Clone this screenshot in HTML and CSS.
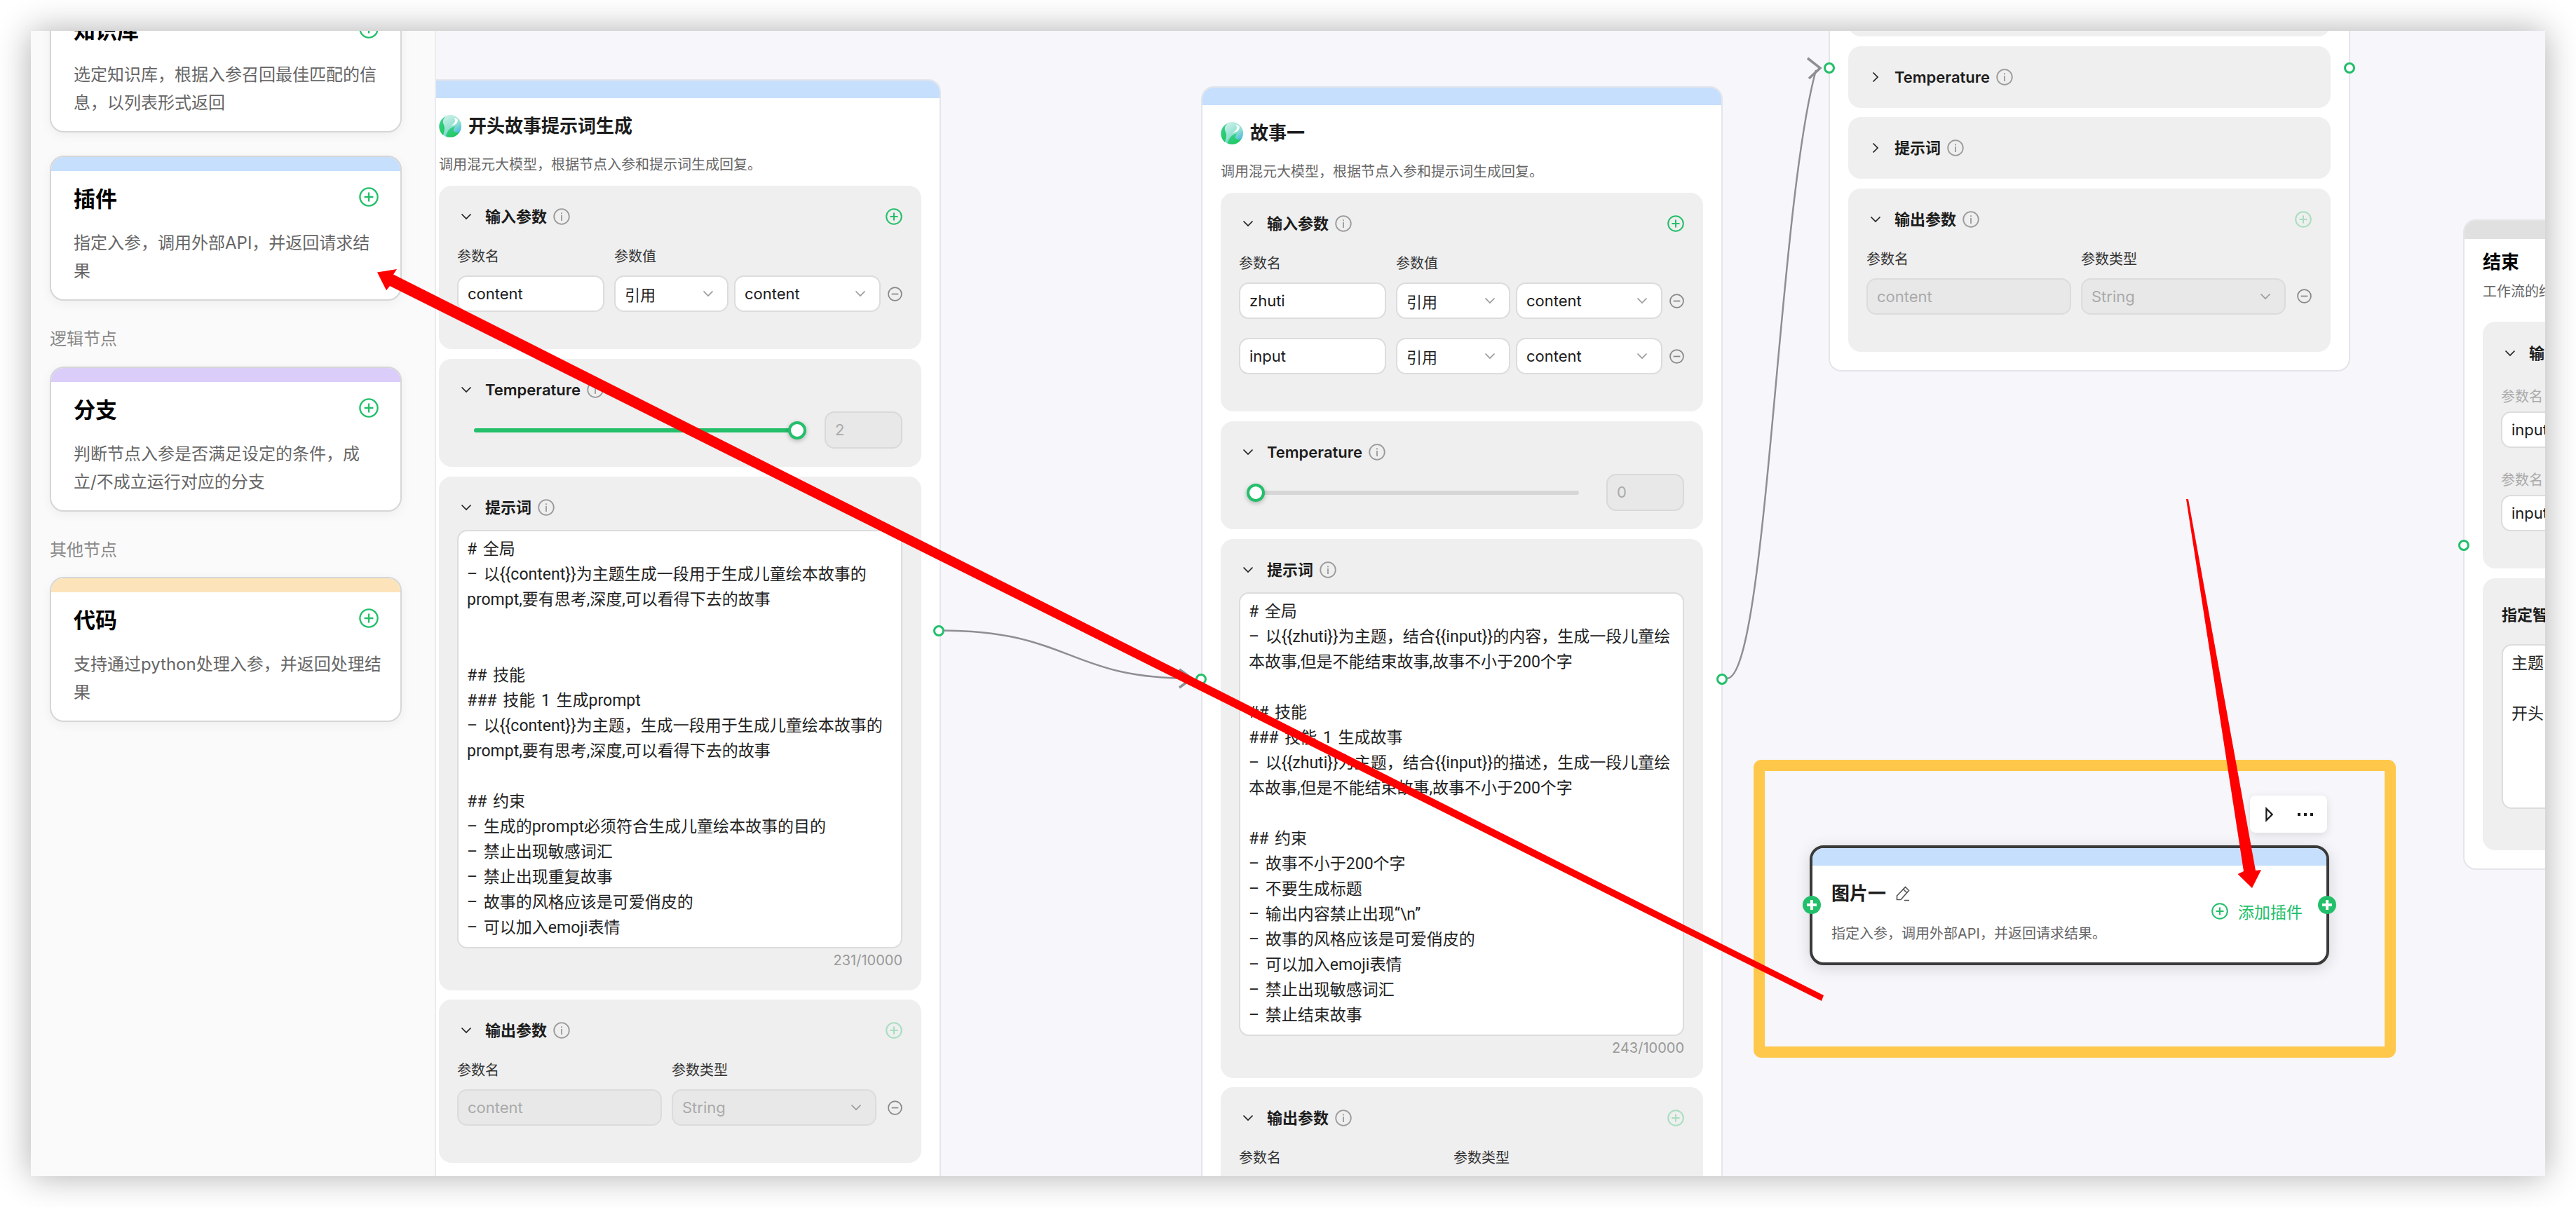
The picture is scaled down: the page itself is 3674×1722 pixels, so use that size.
FILE: index.html
```html
<!DOCTYPE html>
<html lang="zh-CN">
<head>
<meta charset="utf-8">
<title>工作流</title>
<link rel="stylesheet" href="styles.css">
</head>
<body>
<svg class="defs" width="0" height="0" aria-hidden="true">
  <defs>
    <linearGradient id="lg-hy-base" x1="0.2" y1="0" x2="0.9" y2="1">
      <stop offset="0" stop-color="#d6f3ee"/>
      <stop offset="0.55" stop-color="#8fe0cf"/>
      <stop offset="1" stop-color="#2aa6e8"/>
    </linearGradient>
    <linearGradient id="lg-hy-green" x1="0" y1="0" x2="0.6" y2="1">
      <stop offset="0" stop-color="#3ed09a"/>
      <stop offset="1" stop-color="#1fc95a"/>
    </linearGradient>
    <symbol id="i-logo" viewBox="0 0 32 32">
      <circle cx="16" cy="16" r="16" fill="url(#lg-hy-base)"/>
      <path d="M10 2C4 5 0 11 .5 18c.5 5 2.500 8 5.500 11 1-4 2-7 2-10 0-5-3-7-2-11 .5-2.500 2-4.500 4-6z" fill="url(#lg-hy-green)"/>
      <path d="M10 30.500c3 1.300 6 1.500 8 1.300 5-.6 9-3.500 11-7.500-2.500 1-6 1-7.500-.7-1.500-2-.5-4.500 2-7.300-5 1-9 3.500-11 7.500-1.300 2.700-2 4.700-2.500 6.700z" fill="url(#lg-hy-green)"/>
      <path d="M20.500 3.500c3 2 3.500 5.500 1 8.500-1.300 1.500-3.200 2.500-5 3 4.200.2 8.500-1.500 10-5.500.5-1.200.5-2.300 0-3.500-1.700-1-3.700-1.900-6-2.500z" fill="#fff"/>
    </symbol>
    <symbol id="i-down" viewBox="0 0 16 16"><path d="M1.500 4.500L8 11l6.500-6.500" fill="none" stroke="currentColor" stroke-width="1.700"/></symbol>
    <symbol id="i-right" viewBox="0 0 16 16"><path d="M4.500 1.500L11 8l-6.500 6.500" fill="none" stroke="currentColor" stroke-width="1.700"/></symbol>
    <symbol id="i-info" viewBox="0 0 24 24"><circle cx="12" cy="12" r="10.800" fill="none" stroke="currentColor" stroke-width="1.800"/><rect x="11.100" y="10" width="1.800" height="8" fill="currentColor"/><rect x="11.100" y="6.300" width="1.800" height="2" fill="currentColor"/></symbol>
    <symbol id="i-plus" viewBox="0 0 24 24"><circle cx="12" cy="12" r="10.800" fill="none" stroke="currentColor" stroke-width="2"/><path d="M12 6.500v11M6.500 12h11" stroke="currentColor" stroke-width="2"/></symbol>
    <symbol id="i-minus" viewBox="0 0 24 24"><circle cx="12" cy="12" r="10.800" fill="none" stroke="currentColor" stroke-width="2"/><path d="M6.500 12h11" stroke="currentColor" stroke-width="2"/></symbol>
    <symbol id="i-pencil" viewBox="0 0 24 24"><path d="M15.500 2.500l5 5L9 20.500H3.500V15zM12.500 5.500l5 5M14 21.500h7" fill="none" stroke="currentColor" stroke-width="1.600"/></symbol>
  </defs>
</svg>

<div class="window">
  <aside class="sidebar">
    <div class="card card-blue card-scrolled">
      <div class="card-band"></div>
      <div class="card-title"><span>知识库</span><svg class="ico-card"><use href="#i-plus"/></svg></div>
      <p class="card-desc">选定知识库，根据入参召回最佳匹配的信息，以列表形式返回</p>
    </div>
    <div class="card card-blue">
      <div class="card-band"></div>
      <div class="card-title"><span>插件</span><svg class="ico-card"><use href="#i-plus"/></svg></div>
      <p class="card-desc">指定入参，调用外部API，并返回请求结果</p>
    </div>
    <div class="side-label">逻辑节点</div>
    <div class="card card-purple">
      <div class="card-band"></div>
      <div class="card-title"><span>分支</span><svg class="ico-card"><use href="#i-plus"/></svg></div>
      <p class="card-desc">判断节点入参是否满足设定的条件，成<br>立/不成立运行对应的分支</p>
    </div>
    <div class="side-label">其他节点</div>
    <div class="card card-orange">
      <div class="card-band"></div>
      <div class="card-title"><span>代码</span><svg class="ico-card"><use href="#i-plus"/></svg></div>
      <p class="card-desc">支持通过python处理入参，并返回处理结果</p>
    </div>
  </aside>

  <main class="canvas">
    <svg class="edges" viewBox="622 44 3008 1634" aria-hidden="true">
      <path d="M1340 899.500C1530 899.500 1520 968 1700 968" class="edge"/>
      <path d="M1682 955L1700 968L1682 981" class="edge edge-head"/>
      <path d="M2463 968C2520 968 2535 300 2590 100" class="edge"/>
      <path d="M2578 83L2596 97L2580 112" class="edge edge-head"/>
    </svg>

    <!-- 开头故事提示词生成 -->
    <section class="node node-a">
      <div class="node-band"></div>
      <div class="node-head"><svg class="ico-logo"><use href="#i-logo"/></svg><h3>开头故事提示词生成</h3></div>
      <p class="node-desc">调用混元大模型，根据节点入参和提示词生成回复。</p>
      <div class="node-secs">
        <div class="sec">
          <div class="sec-head"><svg class="ico-chev"><use href="#i-down"/></svg><h4>输入参数</h4><svg class="ico-info"><use href="#i-info"/></svg><svg class="ico-add"><use href="#i-plus"/></svg></div>
          <div class="lbl-row"><span class="lbl lbl-name">参数名</span><span class="lbl">参数值</span></div>
          <div class="row-in">
            <div class="ctl ctl-name">content</div>
            <div class="ctl ctl-type">引用<svg class="ico-sel"><use href="#i-down"/></svg></div>
            <div class="ctl ctl-ref">content<svg class="ico-sel"><use href="#i-down"/></svg></div>
            <svg class="ico-minus"><use href="#i-minus"/></svg>
          </div>
        </div>
        <div class="sec sec-temp">
          <div class="sec-head"><svg class="ico-chev"><use href="#i-down"/></svg><h4 class="latin">Temperature</h4><svg class="ico-info"><use href="#i-info"/></svg></div>
          <div class="slider-row">
            <div class="slider"><div class="slider-fill"></div><div class="thumb thumb-end"></div></div>
            <div class="num">2</div>
          </div>
        </div>
        <div class="sec sec-prompt">
          <div class="sec-head"><svg class="ico-chev"><use href="#i-down"/></svg><h4>提示词</h4><svg class="ico-info"><use href="#i-info"/></svg></div>
          <div class="prompt"># 全局
– 以{{content}}为主题生成一段用于生成儿童绘本故事的
prompt,要有思考,深度,可以看得下去的故事


## 技能
### 技能 1 生成prompt
– 以{{content}}为主题，生成一段用于生成儿童绘本故事的
prompt,要有思考,深度,可以看得下去的故事

## 约束
– 生成的prompt必须符合生成儿童绘本故事的目的
– 禁止出现敏感词汇
– 禁止出现重复故事
– 故事的风格应该是可爱俏皮的
– 可以加入emoji表情</div>
          <div class="counter">231/10000</div>
        </div>
        <div class="sec">
          <div class="sec-head"><svg class="ico-chev"><use href="#i-down"/></svg><h4>输出参数</h4><svg class="ico-info"><use href="#i-info"/></svg><svg class="ico-add ico-add-off"><use href="#i-plus"/></svg></div>
          <div class="lbl-row"><span class="lbl lbl-out">参数名</span><span class="lbl">参数类型</span></div>
          <div class="row-in">
            <div class="ctl ctl-off ctl-out">content</div>
            <div class="ctl ctl-off ctl-out ctl-out-b">String<svg class="ico-sel"><use href="#i-down"/></svg></div>
            <svg class="ico-minus ico-minus-out"><use href="#i-minus"/></svg>
          </div>
        </div>
      </div>
      <span class="port port-a"></span>
    </section>

    <!-- 故事一 -->
    <section class="node node-b">
      <div class="node-band"></div>
      <div class="node-head"><svg class="ico-logo"><use href="#i-logo"/></svg><h3>故事一</h3></div>
      <p class="node-desc">调用混元大模型，根据节点入参和提示词生成回复。</p>
      <div class="node-secs">
        <div class="sec">
          <div class="sec-head"><svg class="ico-chev"><use href="#i-down"/></svg><h4>输入参数</h4><svg class="ico-info"><use href="#i-info"/></svg><svg class="ico-add"><use href="#i-plus"/></svg></div>
          <div class="lbl-row"><span class="lbl lbl-name">参数名</span><span class="lbl">参数值</span></div>
          <div class="row-in">
            <div class="ctl ctl-name">zhuti</div>
            <div class="ctl ctl-type">引用<svg class="ico-sel"><use href="#i-down"/></svg></div>
            <div class="ctl ctl-ref">content<svg class="ico-sel"><use href="#i-down"/></svg></div>
            <svg class="ico-minus"><use href="#i-minus"/></svg>
          </div>
          <div class="row-in row-next">
            <div class="ctl ctl-name">input</div>
            <div class="ctl ctl-type">引用<svg class="ico-sel"><use href="#i-down"/></svg></div>
            <div class="ctl ctl-ref">content<svg class="ico-sel"><use href="#i-down"/></svg></div>
            <svg class="ico-minus"><use href="#i-minus"/></svg>
          </div>
        </div>
        <div class="sec sec-temp">
          <div class="sec-head"><svg class="ico-chev"><use href="#i-down"/></svg><h4 class="latin">Temperature</h4><svg class="ico-info"><use href="#i-info"/></svg></div>
          <div class="slider-row">
            <div class="slider slider-empty"><div class="thumb thumb-start"></div></div>
            <div class="num">0</div>
          </div>
        </div>
        <div class="sec sec-prompt">
          <div class="sec-head"><svg class="ico-chev"><use href="#i-down"/></svg><h4>提示词</h4><svg class="ico-info"><use href="#i-info"/></svg></div>
          <div class="prompt"># 全局
– 以{{zhuti}}为主题，结合{{input}}的内容，生成一段儿童绘
本故事,但是不能结束故事,故事不小于200个字

## 技能
### 技能 1 生成故事
– 以{{zhuti}}为主题，结合{{input}}的描述，生成一段儿童绘
本故事,但是不能结束故事,故事不小于200个字

## 约束
– 故事不小于200个字
– 不要生成标题
– 输出内容禁止出现“\n”
– 故事的风格应该是可爱俏皮的
– 可以加入emoji表情
– 禁止出现敏感词汇
– 禁止结束故事</div>
          <div class="counter">243/10000</div>
        </div>
        <div class="sec">
          <div class="sec-head"><svg class="ico-chev"><use href="#i-down"/></svg><h4>输出参数</h4><svg class="ico-info"><use href="#i-info"/></svg><svg class="ico-add ico-add-off"><use href="#i-plus"/></svg></div>
          <div class="lbl-row"><span class="lbl lbl-out">参数名</span><span class="lbl">参数类型</span></div>
        </div>
      </div>
      <span class="port port-b-in"></span>
      <span class="port port-b-out"></span>
    </section>

    <!-- 第三个节点（画布顶部被裁切） -->
    <section class="node node-c">
      <div class="node-secs">
        <div class="sec sec-hidden"></div>
        <div class="sec sec-closed">
          <div class="sec-head"><svg class="ico-chev"><use href="#i-right"/></svg><h4 class="latin">Temperature</h4><svg class="ico-info"><use href="#i-info"/></svg></div>
        </div>
        <div class="sec sec-closed">
          <div class="sec-head"><svg class="ico-chev"><use href="#i-right"/></svg><h4>提示词</h4><svg class="ico-info"><use href="#i-info"/></svg></div>
        </div>
        <div class="sec">
          <div class="sec-head"><svg class="ico-chev"><use href="#i-down"/></svg><h4>输出参数</h4><svg class="ico-info"><use href="#i-info"/></svg><svg class="ico-add ico-add-off"><use href="#i-plus"/></svg></div>
          <div class="lbl-row"><span class="lbl lbl-out">参数名</span><span class="lbl">参数类型</span></div>
          <div class="row-in">
            <div class="ctl ctl-off ctl-out">content</div>
            <div class="ctl ctl-off ctl-out ctl-out-b">String<svg class="ico-sel"><use href="#i-down"/></svg></div>
            <svg class="ico-minus ico-minus-out"><use href="#i-minus"/></svg>
          </div>
        </div>
      </div>
      <span class="port port-c-in"></span>
      <span class="port port-c-out"></span>
    </section>

    <!-- 结束 -->
    <section class="node node-end">
      <div class="node-band node-band-gray"></div>
      <h3 class="end-title">结束</h3>
      <p class="end-desc">工作流的终止节点</p>
      <div class="node-secs">
        <div class="sec sec-end">
          <div class="sec-head"><svg class="ico-chev"><use href="#i-down"/></svg><h4>输出参数</h4></div>
          <div class="lbl end-lbl">参数名</div>
          <div class="ctl end-ctl">input</div>
          <div class="lbl end-lbl end-lbl-next">参数名</div>
          <div class="ctl end-ctl">input</div>
        </div>
        <div class="sec sec-reply">
          <h4 class="reply-title">指定智能体回复</h4>
          <div class="prompt prompt-end">主题：{{zhuti}}

开头：{{content}}</div>
        </div>
      </div>
      <span class="port port-end"></span>
    </section>

    <!-- 图片一（插件节点，已选中） -->
    <section class="plugin">
      <div class="plugin-tools">
        <svg class="ico-play" viewBox="0 0 12 22"><path d="M1.500 2v18L10.500 11z" fill="none" stroke="#1c1c1c" stroke-width="2.400"/></svg>
        <span class="dots"><i></i><i></i><i></i></span>
      </div>
      <div class="plugin-band"></div>
      <div class="plugin-body">
        <div class="plugin-main">
          <div class="plugin-title"><h3>图片一</h3><svg class="ico-pencil"><use href="#i-pencil"/></svg></div>
          <p class="plugin-desc">指定入参，调用外部API，并返回请求结果。</p>
        </div>
        <div class="plugin-add"><svg class="ico-add"><use href="#i-plus"/></svg><span>添加插件</span></div>
      </div>
      <span class="port-fill port-fill-l"><svg viewBox="0 0 26 26"><path d="M13 6v14M6 13h14" stroke="#fff" stroke-width="4"/></svg></span>
      <span class="port-fill port-fill-r"><svg viewBox="0 0 26 26"><path d="M13 6v14M6 13h14" stroke="#fff" stroke-width="4"/></svg></span>
    </section>
  </main>
</div>

<!-- 截图标注：黄框与红色箭头 -->
<svg class="annot" viewBox="0 0 3674 1722" aria-hidden="true">
  <rect x="2509" y="1092" width="900" height="409" rx="3" class="annot-box"/>
  <polygon class="annot-arrow" points="538,388.600 566,384 561,391.500 2601,1420 2598,1428 556,408 551,414.300"/>
  <polygon class="annot-arrow" points="3118,712 3121,712 3217,1242 3225,1241 3212,1267 3191.600,1247 3200,1243"/>
</svg>
</body>
</html>
```

FILE: styles.css
```css
* { box-sizing: border-box; }
html, body { margin: 0; padding: 0; }
body {
  position: relative;
  width: 3674px;
  height: 1722px;
  overflow: hidden;
  background: #fff;
  padding: 44px;
  font-family: Inter, "Noto Sans CJK SC", sans-serif;
  color: #1c1c1c;
}
h3, h4, p { margin: 0; }
.defs { position: absolute; }

.window {
  display: flex;
  width: 3586px;
  height: 1634px;
  overflow: hidden;
  box-shadow: 0 0 46px rgba(0, 0, 0, .32);
  background: #f6f6fb;
}

/* Sidebar */
.sidebar {
  flex: 0 0 578px;
  padding: 0 47px 0 27px;
  background: #fafafa;
  border-right: 2px solid #ebebee;
  overflow: hidden;
}
.card {
  height: 207px;
  margin-bottom: 33px;
  background: #fff;
  border: 2px solid #d6d6d6;
  border-radius: 20px;
  overflow: hidden;
  box-shadow: 0 4px 16px rgba(0, 0, 0, .05);
}
.card-scrolled { margin-top: -62px; }
.card-band { height: 20px; }
.card-blue .card-band { background: #c6dffc; }
.card-purple .card-band { background: #dacdf9; }
.card-orange .card-band { background: #fde3ba; }
.card-title {
  display: flex;
  align-items: flex-start;
  justify-content: space-between;
  height: 36px;
  margin: 22px 31px 0 32px;
  font-size: 31px;
  line-height: 36px;
  font-weight: 700;
  color: #000;
}
.ico-card { width: 28px; height: 28px; margin-top: 1px; color: #23bf6a; }
.card-desc {
  width: 446px;
  margin: 25px 0 0 32px;
  font-size: 24px;
  line-height: 40px;
  color: #666;
}
.side-label {
  height: 34px;
  margin: 38px 0 21.500px;
  font-size: 24px;
  line-height: 34px;
  color: #888;
}

/* Canvas */
.canvas {
  position: relative;
  flex: 1;
  overflow: hidden;
  background: #f6f6fb;
}
.edges {
  position: absolute;
  inset: 0;
  width: 100%;
  height: 100%;
}
.edge { fill: none; stroke: #8e8e93; stroke-width: 2.500; }
.edge-head { stroke-width: 3.500; }

.node {
  position: absolute;
  width: 744px;
  padding: 0 26px;
  background: #fff;
  border: 2px solid #e4e5ea;
  border-radius: 18px;
}
.node-a { left: -24px; top: 69px; height: 1680px; }
.node-b { left: 1091px; top: 79px; height: 1680px; }
.node-c { left: 1986px; top: -66px; padding-bottom: 26px; }
.node-end { left: 2891px; top: 269px; padding-bottom: 26px; }

.node-band {
  height: 25px;
  margin: 0 -26px;
  background: #c6dffc;
  border-radius: 16px 16px 0 0;
}
.node-band-gray { height: 26px; background: #e0e0e0; }
.node-head {
  display: flex;
  align-items: center;
  gap: 10px;
  height: 32px;
  margin-top: 24px;
}
.node-head h3 { font-size: 26px; font-weight: 700; line-height: 32px; }
.ico-logo { width: 32px; height: 32px; }
.node-desc {
  margin: 25px 0 16px;
  font-size: 20px;
  line-height: 28px;
  color: #666;
}
.node-secs { display: flex; flex-direction: column; gap: 13.500px; }

.sec {
  padding: 26px 27px 53px 26px;
  background: #efefef;
  border-radius: 18px;
}
.sec-closed, .sec-temp { padding-bottom: 26px; }
.sec-hidden { height: 72px; padding: 0; }
.sec-prompt { padding-bottom: 29px; }
.sec-head {
  display: flex;
  align-items: center;
  height: 36px;
  padding-left: 5px;
}
.ico-chev { width: 16px; height: 16px; margin-right: 19px; color: #222; }
.sec-head h4 { font-size: 22px; line-height: 36px; font-weight: 700; color: #1c1c1c; }
.sec-head h4.latin { font-weight: 600; }
.ico-info { width: 24px; height: 24px; margin-left: 9px; color: #9a9a9a; }
.ico-add { width: 24px; height: 24px; color: #23bf6a; }
.sec-head .ico-add { margin-left: auto; }
.ico-add-off { opacity: .35; }

.lbl-row { display: flex; margin-top: 25px; height: 28px; }
.lbl { font-size: 20px; line-height: 28px; color: #333; }
.lbl-name { width: 224px; }
.lbl-out { width: 306px; }

.row-in { display: flex; align-items: center; gap: 8px; margin-top: 13px; }
.row-next { margin-top: 27px; }
.ctl {
  display: flex;
  align-items: center;
  justify-content: space-between;
  height: 52px;
  padding: 0 19px 0 13px;
  background: #fff;
  border: 2px solid #dcdcdc;
  border-radius: 14px;
  font-size: 22px;
  color: #1c1c1c;
  flex: none;
}
.ctl-name { width: 210px; margin-right: 6px; }
.ctl-type { width: 163px; }
.ctl-ref { width: 209px; }
.ctl-off { background: #e8e8e8; color: #aaa; }
.ctl-out { width: 292px; margin-right: 6px; }
.ctl-out-b { margin-right: 0; }
.ico-sel { width: 16px; height: 16px; color: #999; }
.ico-minus { width: 21px; height: 21px; margin-left: 2px; color: #888; flex: none; }
.ico-minus-out { margin-left: 8px; }

.slider-row { display: flex; align-items: center; margin-top: 13.500px; }
.slider {
  position: relative;
  flex: 1;
  height: 6px;
  margin: 0 39px 0 24px;
  border-radius: 3px;
  background: #d6d6d6;
}
.slider-fill { width: 100%; height: 100%; border-radius: 3px; background: #23bf6a; }
.thumb {
  position: absolute;
  top: -10px;
  width: 26px;
  height: 26px;
  border: 4px solid #23bf6a;
  border-radius: 50%;
  background: #fff;
  box-shadow: 0 2px 6px rgba(0, 0, 0, .25);
}
.thumb-end { right: -13px; }
.thumb-start { left: -13px; }
.num {
  width: 111px;
  height: 53px;
  padding-left: 13px;
  background: #e8e8e8;
  border: 2px solid #d9d9d9;
  border-radius: 14px;
  font-size: 22px;
  line-height: 49px;
  color: #aaa;
}

.prompt {
  margin-top: 14px;
  padding: 8px 12px 9px;
  background: #fff;
  border: 2px solid #dcdcdc;
  border-radius: 14px;
  font-family: Roboto, "Noto Sans CJK SC", sans-serif;
  font-size: 23px;
  line-height: 36px;
  word-spacing: 3px;
  white-space: pre;
  overflow: hidden;
  color: #222;
}
.counter {
  margin-top: 3px;
  font-size: 20px;
  line-height: 28px;
  text-align: right;
  color: #999;
}

/* Ports */
.port {
  position: absolute;
  width: 16px;
  height: 16px;
  border: 3px solid #23bf6a;
  border-radius: 50%;
  background: #fff;
}
.port-a { right: -7px; top: 777px; }
.port-b-in { left: -10px; top: 836px; }
.port-b-out { right: -9px; top: 836px; }
.port-c-in { left: -9px; top: 109px; }
.port-c-out { right: -9px; top: 109px; }
.port-end { left: -9px; top: 455px; }

/* End node */
.end-title { margin-top: 17px; font-size: 26px; font-weight: 700; line-height: 32px; color: #000; }
.end-desc { margin: 12px 0 29px; font-size: 20px; line-height: 28px; color: #666; white-space: nowrap; }
.sec-end { padding-top: 27px; }
.end-lbl { margin-top: 30px; color: #aaa; }
.end-lbl-next { margin-top: 32px; }
.end-ctl { width: 400px; margin-top: 7px; }
.sec-reply { padding: 36px 27px 59px 27px; }
.reply-title { font-size: 22px; line-height: 32px; font-weight: 700; }
.prompt-end { height: 235px; margin-top: 26px; }

/* Plugin node */
.plugin {
  position: absolute;
  left: 1959px;
  top: 1162px;
  width: 741px;
  height: 171px;
  background: #fff;
  border: 4px solid #3a3a3a;
  border-radius: 20px;
  box-shadow: 0 4px 22px rgba(0, 0, 0, .14);
}
.plugin-band { height: 25px; background: #c6dffc; border-radius: 16px 16px 0 0; }
.plugin-body { display: flex; justify-content: space-between; padding: 24px 34px 0 27px; }
.plugin-title { display: flex; align-items: center; gap: 12px; height: 32px; }
.plugin-title h3 { font-size: 26px; font-weight: 700; line-height: 32px; }
.ico-pencil { width: 24px; height: 24px; color: #555; }
.plugin-desc { margin-top: 27px; font-size: 20px; line-height: 28px; color: #666; }
.plugin-add {
  display: flex;
  align-items: center;
  gap: 14px;
  height: 32px;
  margin-top: 25px;
  font-size: 23px;
  color: #23bf6a;
}
.plugin-tools {
  position: absolute;
  right: -1px;
  top: -75px;
  display: flex;
  align-items: center;
  width: 110px;
  height: 53px;
  padding: 0 20px 0 22px;
  justify-content: space-between;
  background: #fff;
  border-radius: 8px;
  box-shadow: 0 3px 12px rgba(0, 0, 0, .12);
}
.ico-play { width: 11px; height: 22px; }
.dots { display: flex; gap: 5px; }
.dots i { width: 4px; height: 4px; background: #1c1c1c; }
.port-fill {
  position: absolute;
  top: 68px;
  width: 26px;
  height: 26px;
  border-radius: 50%;
  background: #23bf6a;
}
.port-fill svg { display: block; }
.port-fill-l { left: -14px; }
.port-fill-r { right: -14px; }

/* Annotations */
.annot {
  position: absolute;
  left: 0;
  top: 0;
  width: 3674px;
  height: 1722px;
  pointer-events: none;
}
.annot-box { fill: none; stroke: #ffc84b; stroke-width: 16; }
.annot-arrow { fill: #f00; }
```
